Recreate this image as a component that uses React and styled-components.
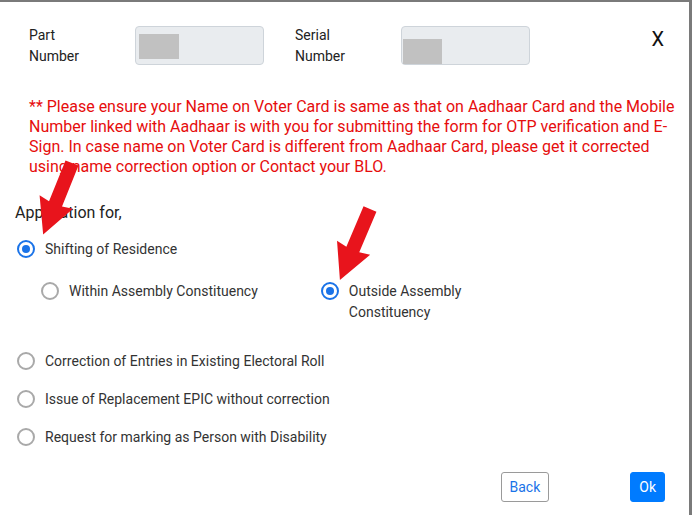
import React from 'react'
import styled, { createGlobalStyle } from 'styled-components'

const Global = createGlobalStyle`
  body {
    margin: 0;
    background: #fff;
    font-family: Roboto, "Liberation Sans", Arial, sans-serif;
  }
`

const Modal = styled.div`
  position: relative;
  box-sizing: border-box;
  width: 692px;
  height: 515px;
  background: #fff;
  border-top: 2px solid #7a7a7a;
  border-right: 3px solid #7a7a7a;
  overflow: hidden;
`

const Header = styled.div`
  display: flex;
  align-items: flex-start;
  padding: 24px 0 0 29px;
`

const FieldLabel = styled.div`
  width: 106px;
  font-size: 14px;
  line-height: 21px;
  color: #222;
  margin-top: -1px;
`

const FieldInput = styled.div`
  box-sizing: border-box;
  width: 129px;
  height: 39px;
  margin-right: 31px;
  background: #e9ecef;
  border: 1px solid #ced4da;
  border-radius: 4px;
  padding: ${(p) => p.$pad};
`

const Blur = styled.div`
  width: ${(p) => p.$w}px;
  height: ${(p) => p.$h}px;
  background: #c1c1c1;
`

const Close = styled.div`
  margin-left: auto;
  margin-right: 25px;
  margin-top: 1px;
  font-size: 20px;
  color: #111;
`

const Notice = styled.p`
  margin: 30px 14px 0 29px;
  font-size: 16px;
  line-height: 20px;
  color: #e60d0d;
`

const Question = styled.div`
  margin: 24px 0 0 15px;
  font-size: 16px;
  line-height: 24px;
  color: #222;
`

const Options = styled.div`
  display: flex;
  flex-direction: column;
  padding-left: 17px;
  margin-top: 14px;
`

const Option = styled.label`
  display: flex;
  align-items: flex-start;
  gap: 10px;
  font-size: 14px;
  line-height: 21px;
  color: #333;
  width: ${(p) => (p.$w ? `${p.$w}px` : 'auto')};
`

const Radio = styled.span`
  flex: none;
  box-sizing: border-box;
  width: 18px;
  height: 18px;
  margin-top: 1px;
  border-radius: 50%;
  border: 2px solid ${(p) => (p.$on ? '#1a73e8' : '#a9a9a9')};
  display: flex;
  align-items: center;
  justify-content: center;
  &::after {
    content: '';
    width: 8px;
    height: 8px;
    border-radius: 50%;
    background: ${(p) => (p.$on ? '#1a73e8' : 'transparent')};
  }
`

const SubRow = styled.div`
  display: flex;
  padding-left: 24px;
  margin: 21px 0 28px;
  gap: 63px;
`

const Stack = styled.div`
  display: flex;
  flex-direction: column;
  gap: 17px;
`

const Footer = styled.div`
  display: flex;
  justify-content: flex-end;
  gap: 81px;
  padding: 24px 24px 0 0;
`

const Button = styled.button`
  height: 30px;
  padding: 0 8px;
  font-family: inherit;
  font-size: 14px;
  border-radius: 3px;
  border: 1px solid ${(p) => (p.$primary ? '#007bff' : '#9a9a9a')};
  background: ${(p) => (p.$primary ? '#007bff' : '#fff')};
  color: ${(p) => (p.$primary ? '#fff' : '#1a73e8')};
`

const Arrow = styled.svg`
  position: absolute;
  left: ${(p) => p.$x}px;
  top: ${(p) => p.$y}px;
  overflow: visible;
`

const RedArrow = ({ x, y, angle }) => (
  <Arrow $x={x} $y={y} width="1" height="1">
    <polygon
      transform={`rotate(${angle})`}
      points="-7,0 7,0 7,-44 18,-42 0,-77 -18,-42 -7,-44"
      fill="#e8141c"
    />
  </Arrow>
)

export default function App() {
  return (
    <>
      <Global />
      <Modal>
        <Header>
          <FieldLabel>Part<br />Number</FieldLabel>
          <FieldInput $pad="7px 0 0 3px"><Blur $w={40} $h={25} /></FieldInput>
          <FieldLabel>Serial<br />Number</FieldLabel>
          <FieldInput $pad="12px 0 0 1px"><Blur $w={39} $h={25} /></FieldInput>
          <Close>X</Close>
        </Header>
        <Notice>
          ** Please ensure your Name on Voter Card is same as that on Aadhaar Card and the Mobile
          Number linked with Aadhaar is with you for submitting the form for OTP verification and E-Sign.
          In case name on Voter Card is different from Aadhaar Card, please get it corrected
          using name correction option or Contact your BLO.
        </Notice>
        <Question>Application for,</Question>
        <Options>
          <Option><Radio $on />Shifting of Residence</Option>
          <SubRow>
            <Option><Radio />Within Assembly Constituency</Option>
            <Option $w={150}><Radio $on />Outside Assembly Constituency</Option>
          </SubRow>
          <Stack>
            <Option><Radio />Correction of Entries in Existing Electoral Roll</Option>
            <Option><Radio />Issue of Replacement EPIC without correction</Option>
            <Option><Radio />Request for marking as Person with Disability</Option>
          </Stack>
        </Options>
        <Footer>
          <Button>Back</Button>
          <Button $primary>Ok</Button>
        </Footer>
        <RedArrow x={72} y={161} angle={-158} />
        <RedArrow x={370} y={207} angle={-157} />
      </Modal>
    </>
  )
}
